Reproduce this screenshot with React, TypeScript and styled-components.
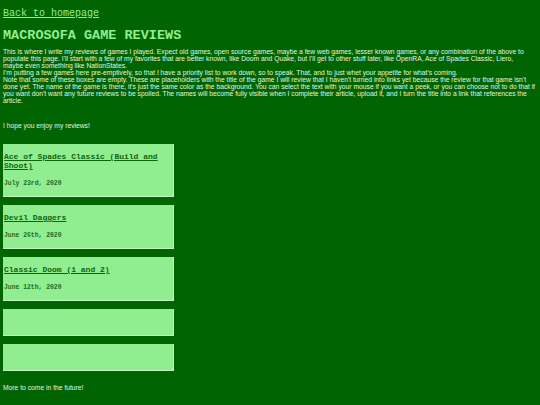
import React from "react";
import styled, { createGlobalStyle } from "styled-components";

const GlobalStyle = createGlobalStyle`
  html, body {
    margin: 0;
    padding: 0;
    background: #006400;
  }
`;

const Page = styled.div`
  padding: 8px 0 20px 3px;
  font-family: "Liberation Sans", Arial, sans-serif;
  color: #e2f6e2;
`;

const BackLink = styled.a`
  display: block;
  width: max-content;
  font-family: "Liberation Mono", "Courier New", monospace;
  font-size: 10px;
  line-height: 12px;
  color: #90ee90;
  text-decoration: underline;
`;

const Title = styled.h1`
  margin: 8px 0 0 0;
  font-family: "Liberation Mono", "Courier New", monospace;
  font-size: 13.5px;
  line-height: 15px;
  font-weight: bold;
  color: #90ee90;
`;

const Text = styled.p<{ $top: number }>`
  margin: ${(p) => p.$top}px 0 0 0;
  font-size: 6.74px;
  line-height: 7px;
  white-space: nowrap;
`;

const CardList = styled.div`
  display: flex;
  flex-direction: column;
  gap: 8px;
  margin-top: 15.5px;
`;

const Card = styled.div`
  box-sizing: border-box;
  width: 171px;
  min-height: 27px;
  padding: 8px 1px 8px 1px;
  background: #90ee90;
  border-right: 1px solid #c4fbc4;
  border-bottom: 1px solid #c4fbc4;
`;

const CardTitle = styled.a`
  display: block;
  font-family: "Liberation Mono", "Courier New", monospace;
  font-size: 8px;
  line-height: 9px;
  font-weight: bold;
  color: #10640f;
  text-decoration: underline;
`;

const CardDate = styled.div`
  margin-top: 9px;
  font-family: "Liberation Mono", "Courier New", monospace;
  font-size: 6.4px;
  line-height: 9px;
  font-weight: bold;
  color: #1f6a1f;
`;

const intro = [
  "This is where I write my reviews of games I played. Expect old games, open source games, maybe a few web games, lesser known games, or any combination of the above to",
  "populate this page. I'll start with a few of my favorites that are better known, like Doom and Quake, but I'll get to other stuff later, like OpenRA, Ace of Spades Classic, Liero,",
  "maybe even something like NationStates.",
  "I'm putting a few games here pre-emptively, so that I have a priority list to work down, so to speak. That, and to just whet your appetite for what's coming.",
  "Note that some of these boxes are empty. These are placeholders with the title of the game I will review that I haven't turned into links yet because the review for that game isn't",
  "done yet. The name of the game is there, it's just the same color as the background. You can select the text with your mouse if you want a peek, or you can choose not to do that if",
  "you want don't want any future reviews to be spoiled. The names will become fully visible when I complete their article, upload it, and I turn the title into a link that references the",
  "article.",
];

const reviews = [
  { title: "Ace of Spades Classic (Build and Shoot)", date: "July 23rd, 2020" },
  { title: "Devil Daggers", date: "June 26th, 2020" },
  { title: "Classic Doom (1 and 2)", date: "June 12th, 2020" },
  { title: "", date: "" },
  { title: "", date: "" },
];

export default function App() {
  return (
    <>
      <GlobalStyle />
      <Page>
        <BackLink href="#">Back to homepage</BackLink>
        <Title>MACROSOFA GAME REVIEWS</Title>
        <Text $top={4.5}>
          {intro.map((line, i) => (
            <React.Fragment key={i}>
              {line}
              {i < intro.length - 1 && <br />}
            </React.Fragment>
          ))}
        </Text>
        <Text $top={18}>I hope you enjoy my reviews!</Text>
        <CardList>
          {reviews.map((r, i) => (
            <Card key={i}>
              {r.title && <CardTitle href="#">{r.title}</CardTitle>}
              {r.date && <CardDate>{r.date}</CardDate>}
            </Card>
          ))}
        </CardList>
        <Text $top={12.5}>More to come in the future!</Text>
      </Page>
    </>
  );
}
